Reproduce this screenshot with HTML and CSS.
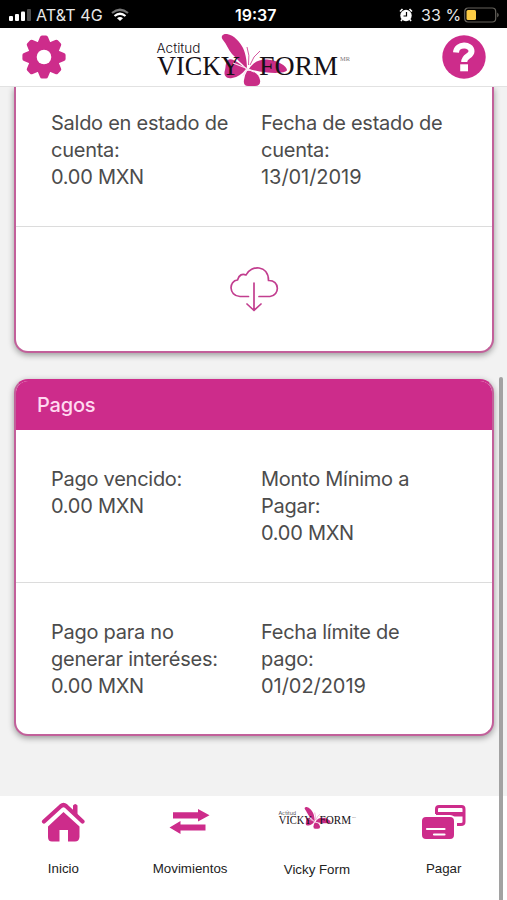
FILE: index.html
```html
<!DOCTYPE html>
<html lang="es">
<head>
<meta charset="utf-8">
<title>Vicky Form</title>
<link rel="stylesheet" href="styles.css">
</head>
<body>
<div class="status">
  <svg class="signal" width="24" height="14" viewBox="0 0 24 14" fill="#fff"><rect x="0" y="8" width="4" height="5" rx="1"/><rect x="6" y="6" width="4" height="7" rx="1"/><rect x="12" y="3.500" width="4" height="9.500" rx="1"/><rect x="18" y="1" width="4" height="12" rx="1" fill="#4c4c4c"/></svg>
  <span class="carrier">AT&amp;T 4G</span>
  <svg class="wifi" width="18" height="14" viewBox="0 0 18 14" fill="none" stroke="#fff" stroke-width="2.200"><path d="M1 5Q9-1.500 17 5" stroke="#777"/><path d="M3.500 8Q9 3.500 14.500 8"/><path d="M9 13L6 10.200Q9 8 12 10.200Z" fill="#fff" stroke="none"/></svg>
  <span class="time">19:37</span>
  <svg class="alarm" width="14" height="14" viewBox="0 0 14 14"><circle cx="7" cy="7.500" r="5.700" fill="#fff"/><path d="M1 3.500L3.500 1M10.500 1L13 3.500M3 11.500L2 13M11 11.500L12 13" stroke="#fff" stroke-width="1.600"/><path d="M7.500 4V8H4.500" fill="none" stroke="#000" stroke-width="1.200"/></svg>
  <span class="percent">33 %</span>
  <svg class="battery" width="36" height="16" viewBox="0 0 36 16"><rect x=".7" y="1" width="31" height="14" rx="3.500" fill="none" stroke="#66635d" stroke-width="1.200"/><rect x="2.500" y="3" width="9.500" height="10" rx="1.500" fill="#fccb45"/><path d="M33.300 5.500Q36 8 33.300 10.500Z" fill="#77746d"/></svg>
</div>

<header class="top">
  <svg class="gear" width="44" height="44" viewBox="-22 -22 44 44">
    <g fill="#cd2c8b">
      <circle r="15.800"/>
      <g id="teeth"><path id="tooth" d="M-6.500-14L-4-20Q-3.500-21.600-2-21.600H2Q3.500-21.600 4-20L6.500-14ZM-6.500 14L-4 20Q-3.500 21.600-2 21.600H2Q3.500 21.600 4 20L6.500 14Z"/><use href="#tooth" transform="rotate(90)"/></g>
      <use href="#teeth" transform="rotate(45)"/>
    </g>
    <circle r="7.300" fill="#fff"/>
  </svg>
  <svg class="brand" width="210" height="58" viewBox="0 0 210 58">
    <g id="logo">
      <g fill="#c92d86">
        <path d="M98 41C93 36 87 30 83 26C79 21 78 17 74 12C71 8 74 5.500 78 6C85 7 91 14 94 20C97 26 98 35 98 41Z"/>
        <path d="M97 41C91 36 83 29 79 32C76 35 77 39 76 42C74 48 78 51 83 50C89 49 93 46 97 41Z"/>
        <path d="M100 41C104 34 111 31 118 31.500C128 32 138 38 138 42C137 46 117 46 100 41Z"/>
        <path d="M98 43C104 42 110 46 111 52Q112 58 106 58H99Q94 58 95 52Q96 46 98 43Z"/>
        <path d="M99.500 37Q101 27 98 19M101 37Q104 28 111 23" fill="none" stroke="#c92d86" stroke-width=".8"/>
      </g>
      <g fill="#161016">
        <text class="logo-sans" x="7.500" y="25" font-size="13" textLength="44" lengthAdjust="spacingAndGlyphs">Actitud</text>
        <text class="logo-serif" x="8" y="46.700" font-size="28" textLength="83" lengthAdjust="spacingAndGlyphs">VICKY</text>
        <text class="logo-serif" x="110" y="46.700" font-size="28" textLength="79" lengthAdjust="spacingAndGlyphs">FORM</text>
        <text class="logo-serif" x="191" y="33" font-size="6" opacity=".6" textLength="10" lengthAdjust="spacingAndGlyphs">MR</text>
      </g>
      <path d="M84 35L98 40.500L105 44M98.500 40L94 48" fill="none" stroke="#fbe3f1" stroke-width="1.200"/>
    </g>
  </svg>
  <svg class="help" width="44" height="44" viewBox="0 0 44 44"><circle cx="22" cy="22" r="21.700" fill="#cd2c8b"/><path d="M14 17.500C14.500 8.500 29.500 8.500 29.500 16.200C29.500 21.500 22.200 20.500 22.200 27" fill="none" stroke="#fff" stroke-width="6"/><rect x="18.200" y="29.300" width="7.800" height="7" fill="#fff"/></svg>
</header>

<main class="content">
  <section class="card card-statement">
    <div class="row">
      <p>Saldo en estado de<br>cuenta:<br>0.00 MXN</p>
      <p>Fecha de estado de<br>cuenta:<br><span class="date">13/01/2019</span></p>
    </div>
    <div class="download">
      <svg width="50" height="46" viewBox="0 0 50 46" fill="none" stroke="#c23e8f" stroke-width="1.700" stroke-linecap="round" stroke-linejoin="round"><path d="M19.500 30.500H11C-1 29.500 0 14.500 8.500 14C10 8.500 13.500 7.500 17 9C22-1.500 39.500-1 39.500 14.500C51 14 51 29.500 41 30.500H30M25 17V44M18 38L25 44.500L32 38"/></svg>
    </div>
  </section>

  <section class="card card-payments">
    <h2>Pagos</h2>
    <div class="row">
      <p>Pago vencido:<br>0.00 MXN</p>
      <p>Monto Mínimo a<br>Pagar:<br>0.00 MXN</p>
    </div>
    <div class="row">
      <p>Pago para no<br>generar interéses:<br>0.00 MXN</p>
      <p>Fecha límite de<br>pago:<br><span class="date">01/02/2019</span></p>
    </div>
  </section>
</main>

<nav class="tabs">
  <a class="tab"><svg width="44" height="42" viewBox="0 0 44 42" fill="#cd2c8b"><path d="M3 20.500L20 5Q22.500 3 25 5L41.500 20.500" fill="none" stroke="#cd2c8b" stroke-width="4.200" stroke-linecap="round"/><path d="M32 11V4.500Q34.200 1.500 36.500 4.500V15Z"/><path d="M22.500 11L38.500 25.500V36Q38 40.500 34 40.500H27V29H18.500V40.500H11Q7 40.500 7 36V25.500Z"/></svg><span>Inicio</span></a>
  <a class="tab"><svg width="44" height="42" viewBox="0 0 44 42" fill="#cd2c8b"><path d="M5 11.300H30V8L41.500 14.300L30 20.600V17.500H5ZM37.500 23.500H12.500V20L1.500 26.500L12.500 33V29.500H37.500Z"/></svg><span>Movimientos</span></a>
  <a class="tab tab-brand"><svg width="86" height="42" viewBox="0 0 86 42"><use href="#logo" transform="translate(1.500 3.500) scale(.4 .42)"/></svg><span>Vicky Form</span></a>
  <a class="tab"><svg width="46" height="42" viewBox="0 0 46 42" fill="#cd2c8b"><path d="M15.500 13V8Q15.500 5.500 18 5.500H40.500Q43 5.500 43 8V21Q43 23.500 40 23.500H36" fill="none" stroke="#cd2c8b" stroke-width="3"/><rect x="15" y="11" width="28" height="4.500"/><rect x="0" y="15" width="34" height="24" rx="5" stroke="#fff" stroke-width="2"/><path d="M6 28H23.500M13 33.500H23.500" stroke="#fff" stroke-width="2.200" stroke-linecap="round"/></svg><span>Pagar</span></a>
</nav>
<div class="scrollbar"></div>
</body>
</html>
```
FILE: styles.css
```css
* { box-sizing: border-box; }
body {
  margin: 0;
  width: 507px;
  height: 900px;
  overflow: hidden;
  display: flex;
  flex-direction: column;
  position: relative;
  background: #f2f2f2;
  font-family: Inter, "Liberation Sans", sans-serif;
  color: #4c4c4c;
}
svg { display: block; flex: none; }
.logo-sans { font-family: Inter, sans-serif; font-weight: 300; }
.logo-serif { font-family: "Liberation Serif", serif; }

.status {
  height: 28px;
  flex: none;
  display: grid;
  grid-template-columns: 27px 75px 124px 164px 22px 43px 36px;
  align-items: center;
  padding: 2px 0 0 9px;
  background: #000;
  color: #e8e8e8;
  font-size: 16px;
  line-height: 24px;
  white-space: nowrap;
}
.status .time { color: #fff; font-weight: 600; }
.status .carrier, .status .percent { letter-spacing: .1px; }

.top {
  height: 59px;
  flex: none;
  display: flex;
  justify-content: space-between;
  align-items: flex-start;
  padding: 0 21px 0 22px;
  background: #fff;
  border-bottom: 1px solid #e2e2e2;
}
.gear, .help { margin-top: 7px; }
.brand { margin-left: -1px; }

.content { height: 709px; flex: none; padding: 0 13px 0 14px; overflow: hidden; }
.card {
  background: #fff;
  border: 2px solid #c2609a;
  border-radius: 14px;
  overflow: hidden;
  box-shadow: 0 2px 6px rgba(0, 0, 0, .38);
}
.card-statement {
  height: 266px;
  border-top: 0;
  border-top-left-radius: 0;
  border-top-right-radius: 0;
}
.card-payments { height: 357px; margin-top: 26px; border-top-color: #cd2c8b; }
.card h2 {
  height: 50px;
  margin: -1px 0 0;
  padding-left: 21px;
  background: #cd2c8b;
  color: #ffd9f0;
  font-size: 20px;
  font-weight: 500;
  letter-spacing: -.2px;
  line-height: 51px;
}
.row {
  display: grid;
  grid-template-columns: 210px 1fr;
  height: 153px;
  padding: 36px 0 0 35px;
  border-bottom: 1px solid #dcdcdc;
  font-size: 20px;
  line-height: 27px;
  letter-spacing: -.26px;
}
.date { letter-spacing: -.05px; }
.row:last-child { border-bottom: 0; }
.card-statement .row { height: 140px; padding-top: 23px; }
.row p { margin: 0; white-space: nowrap; }
.download { display: flex; justify-content: center; padding-top: 39px; }

.tabs {
  height: 104px;
  flex: none;
  display: grid;
  grid-template-columns: repeat(4, 1fr);
  background: #fff;
  font-family: "Liberation Sans", sans-serif;
  color: #222;
  font-size: 13.3px;
}
.tab { display: flex; flex-direction: column; align-items: center; padding-top: 5px; }
.tab span { margin-top: 17px; line-height: 18px; }
.tab-brand span { margin-top: 18px; }

.scrollbar {
  position: absolute;
  right: 4px;
  top: 377px;
  width: 4px;
  height: 523px;
  border-radius: 3px 3px 0 0;
  background: #a2a2a2;
}
```
